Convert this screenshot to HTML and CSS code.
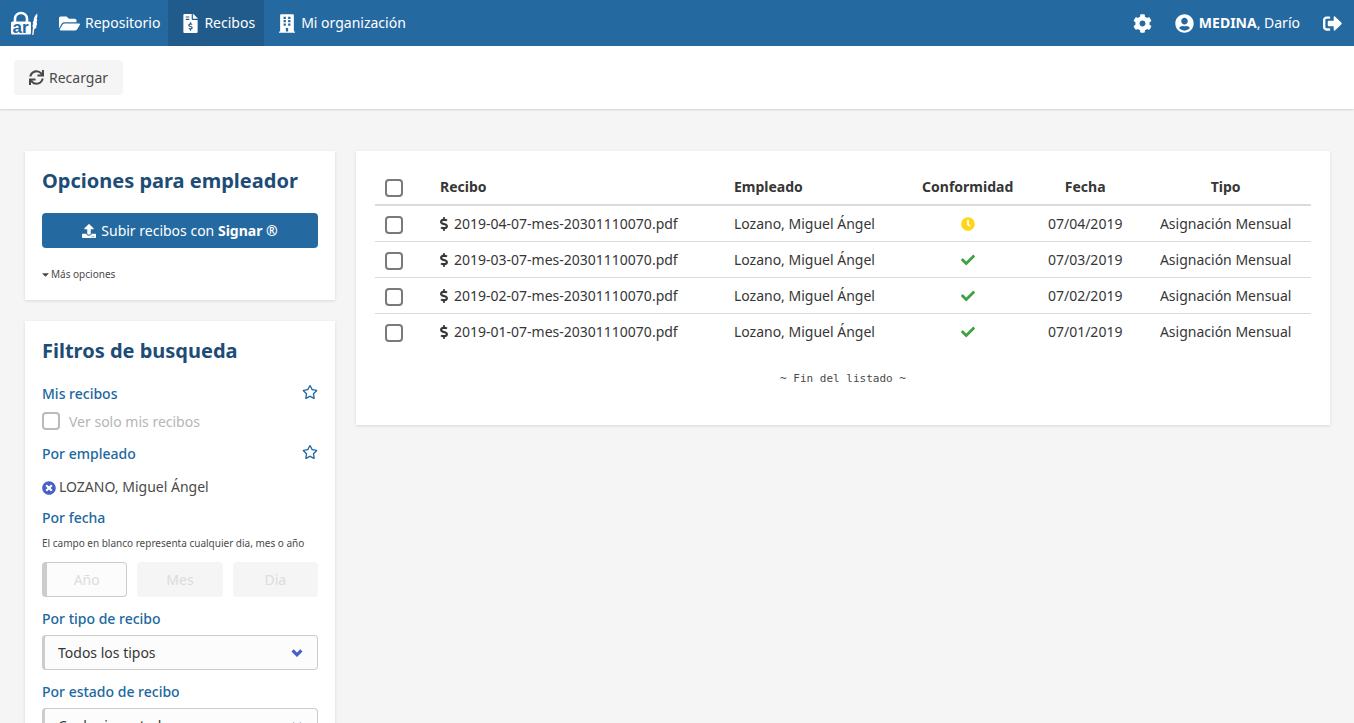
FILE: index.html
```
<!DOCTYPE html>
<html lang="es">
<head>
<meta charset="utf-8">
<meta name="viewport" content="width=device-width, initial-scale=1">
<title>Recibos</title>
<link rel="stylesheet" href="styles.css">
</head>
<body>
<svg class="sprite" aria-hidden="true">
  <symbol id="star" viewBox="0 0 576 512"><path d="M528.1 171.5L382 150.2 316.7 17.8c-11.7-23.6-45.6-23.9-57.4 0L194 150.2 47.9 171.5c-26.2 3.8-36.7 36.1-17.7 54.6l105.7 103-25 145.5c-4.5 26.3 23.2 46 46.4 33.7L288 439.6l130.7 68.7c23.2 12.2 50.9-7.4 46.4-33.7l-25-145.5 105.7-103c19-18.5 8.5-50.8-17.7-54.6zM388.6 312.3l23.7 138.4L288 385.4l-124.3 65.3 23.7-138.4-100.6-98 139-20.2 62.2-126 62.2 126 139 20.2-100.6 98z"/></symbol>
  <symbol id="check" viewBox="0 0 512 512"><path d="M173.898 439.404l-166.4-166.4c-9.997-9.997-9.997-26.206 0-36.204l36.203-36.204c9.997-9.998 26.207-9.998 36.204 0L192 312.69 432.095 72.596c9.997-9.997 26.207-9.997 36.204 0l36.203 36.204c9.997 9.997 9.997 26.206 0 36.204l-294.4 294.401c-9.998 9.997-26.207 9.997-36.204-.001z"/></symbol>
  <symbol id="dollar" viewBox="0 0 288 512"><path d="M209.2 233.4l-108-31.6C88.7 198.2 80 186.5 80 173.5c0-16.3 13.2-29.5 29.5-29.5h66.3c12.2 0 24.2 3.7 34.2 10.5 6.1 4.1 14.3 3.1 19.5-2l34.8-34c7.1-6.9 6.1-18.4-1.8-24.5C238 74.8 207.4 64.1 176 64V16c0-8.8-7.2-16-16-16h-32c-8.8 0-16 7.2-16 16v48h-2.5C45.8 64-5.4 118.7.5 183.6c4.2 46.1 39.4 83.6 83.8 96.6l102.5 30c12.5 3.7 21.2 15.3 21.2 28.3 0 16.3-13.2 29.5-29.5 29.5h-66.3C100 368 88 364.3 78 357.5c-6.1-4.1-14.3-3.1-19.5 2l-34.8 34c-7.1 6.9-6.1 18.4 1.8 24.5 24.5 19.2 55.1 29.9 86.5 30v48c0 8.8 7.2 16 16 16h32c8.8 0 16-7.2 16-16v-48.2c46.6-.9 90.3-28.6 105.7-72.7 21.5-61.6-14.6-124.8-72.5-141.7z"/></symbol>
  <symbol id="chevron" viewBox="0 0 12 8"><path d="M1.600 1.400L6 5.800l4.400-4.400" fill="none" stroke="currentColor" stroke-width="3.200"/></symbol>
</svg>

<nav class="navbar">
  <a class="brand" href="#" aria-label="Inicio">
    <svg class="brand-logo" viewBox="0 0 27 25">
      <path d="M4 12V7.500a6 5.500 0 0 1 12 0V12" fill="none" stroke="currentColor" stroke-width="2.600"/>
      <rect x="0" y="10.500" width="20" height="13" rx="1.500" fill="currentColor"/>
      <text class="brand-text" x="1.500" y="22">ar</text>
      <path d="M26.200 2.500c-2 1.500-3.400 4-3.600 7.500l-.9 1.500.5 1.500-.8 1.500.5 2-.7 7.500h1.200l.9-6c1.300-.5 2-1.300 2.400-2.600l-.9-.2 1.100-1.300c.2-.8.2-1.500.1-2.300l-.9-.1 1-1.300c.1-.8.100-1.500 0-2.300l-.8-.1.900-1.300c.2-1.300.2-2.700 0-4z" fill="currentColor"/>
    </svg>
  </a>
  <a class="nav-link" href="#">
    <svg class="icon icon-folder" viewBox="0 0 576 512"><path d="M572.694 292.093L500.27 416.248A63.997 63.997 0 0 1 444.989 448H45.025c-18.523 0-30.064-20.093-20.731-36.093l72.424-124.155A64 64 0 0 1 152 256h399.964c18.523 0 30.064 20.093 20.730 36.093zM152 224h328v-48c0-26.510-21.490-48-48-48H272l-64-64H48C21.490 64 0 85.490 0 112v278.046l69.077-118.418C86.214 242.250 117.989 224 152 224z"/></svg>
    <span>Repositorio</span>
  </a>
  <a class="nav-link is-active" href="#" aria-current="page">
    <svg class="icon icon-file" viewBox="0 0 384 512"><path d="M377 105L279.100 7c-4.500-4.500-10.600-7-17-7H256v128h128v-6.100c0-6.300-2.500-12.400-7-16.900zm-153 31V0H24C10.700 0 0 10.700 0 24v464c0 13.300 10.700 24 24 24h336c13.300 0 24-10.700 24-24V160H248c-13.200 0-24-10.800-24-24zM64 72c0-4.420 3.580-8 8-8h80c4.420 0 8 3.580 8 8v16c0 4.420-3.580 8-8 8H72c-4.420 0-8-3.580-8-8V72zm0 80v-16c0-4.420 3.580-8 8-8h80c4.420 0 8 3.580 8 8v16c0 4.420-3.580 8-8 8H72c-4.420 0-8-3.580-8-8zm144 263.880V440c0 4.420-3.580 8-8 8h-16c-4.420 0-8-3.580-8-8v-24.290c-11.290-.58-22.270-4.520-31.370-11.350-3.900-2.930-4.100-8.770-.57-12.140l11.750-11.210c2.770-2.640 6.890-2.760 10.130-.73 3.870 2.420 8.260 3.720 12.820 3.720h28.110c6.500 0 11.800-5.920 11.800-13.190 0-5.950-3.610-11.190-8.770-12.730l-45-13.500c-18.590-5.580-31.580-23.420-31.580-43.390 0-24.520 19.050-44.440 42.670-45.070V232c0-4.420 3.580-8 8-8h16c4.420 0 8 3.580 8 8v24.290c11.290.58 22.270 4.510 31.370 11.350 3.900 2.930 4.100 8.770.57 12.140l-11.750 11.210c-2.770 2.640-6.890 2.760-10.130.73-3.870-2.430-8.260-3.720-12.820-3.720h-28.110c-6.500 0-11.800 5.920-11.800 13.190 0 5.950 3.610 11.190 8.770 12.730l45 13.500c18.590 5.580 31.580 23.420 31.580 43.390 0 24.530-19.050 44.440-42.670 45.070z"/></svg>
    <span>Recibos</span>
  </a>
  <a class="nav-link" href="#">
    <svg class="icon icon-building" viewBox="0 0 448 512"><path fill-rule="evenodd" d="M436 480h-20V24c0-13.255-10.745-24-24-24H56C42.745 0 32 10.745 32 24v456H12c-6.627 0-12 5.373-12 12v20h448v-20c0-6.627-5.373-12-12-12zM128 64h64v64h-64zM256 64h64v64h-64zM128 160h64v64h-64zM256 160h64v64h-64zM128 256h64v64h-64zM256 256h64v64h-64zM192 384h64v96h-64z"/></svg>
    <span>Mi organización</span>
  </a>
  <div class="nav-end">
    <a class="nav-action" href="#" aria-label="Configuración">
      <svg class="icon icon-lg" viewBox="0 0 512 512"><path d="M487.400 315.700l-42.600-24.600c4.300-23.200 4.300-47 0-70.200l42.600-24.600c4.900-2.800 7.100-8.600 5.500-14-11.100-35.600-30-67.800-54.700-94.600-3.800-4.100-10-5.100-14.800-2.300L380.800 110c-17.900-15.400-38.500-27.300-60.800-35.100V25.800c0-5.600-3.900-10.500-9.400-11.700-36.700-8.200-74.300-7.800-109.200 0-5.500 1.200-9.400 6.100-9.400 11.700V75c-22.200 7.900-42.800 19.800-60.800 35.100L88.700 85.500c-4.900-2.800-11-1.900-14.800 2.300-24.700 26.700-43.600 58.900-54.700 94.600-1.700 5.400.6 11.200 5.500 14L67.300 221c-4.300 23.200-4.300 47 0 70.200l-42.600 24.600c-4.900 2.800-7.100 8.600-5.500 14 11.100 35.600 30 67.800 54.700 94.600 3.800 4.100 10 5.100 14.800 2.300l42.600-24.600c17.900 15.400 38.500 27.300 60.800 35.100v49.200c0 5.600 3.900 10.500 9.400 11.700 36.700 8.200 74.300 7.800 109.200 0 5.500-1.200 9.400-6.100 9.400-11.700v-49.200c22.200-7.900 42.800-19.800 60.800-35.100l42.600 24.600c4.900 2.800 11 1.900 14.800-2.300 24.700-26.700 43.600-58.900 54.700-94.600 1.500-5.500-.7-11.300-5.600-14.100zM256 336c-44.100 0-80-35.900-80-80s35.900-80 80-80 80 35.900 80 80-35.900 80-80 80z"/></svg>
    </a>
    <a class="nav-user" href="#">
      <svg class="icon icon-lg" viewBox="0 0 496 512"><path d="M248 8C111 8 0 119 0 256s111 248 248 248 248-111 248-248S385 8 248 8zm0 96c48.600 0 88 39.400 88 88s-39.400 88-88 88-88-39.400-88-88 39.400-88 88-88zm0 344c-58.700 0-111.300-26.600-146.500-68.200 18.800-35.400 55.600-59.800 98.500-59.800 2.400 0 4.800.4 7.100 1.100 13 4.200 26.600 6.900 40.900 6.900 14.300 0 28-2.700 40.900-6.900 2.300-.7 4.700-1.100 7.100-1.100 42.900 0 79.700 24.400 98.500 59.800C359.300 421.400 306.700 448 248 448z"/></svg>
      <span><b>MEDINA</b>, Darío</span>
    </a>
    <a class="nav-action" href="#" aria-label="Salir">
      <svg class="icon icon-lg" viewBox="0 0 512 512"><path d="M497 273L329 441c-15 15-41 4.500-41-17v-96H152c-13.300 0-24-10.700-24-24v-96c0-13.300 10.700-24 24-24h136V88c0-21.400 25.900-32 41-17l168 168c9.300 9.400 9.300 24.600 0 34zM192 436v-40c0-6.600-5.400-12-12-12H96c-17.700 0-32-14.300-32-32V160c0-17.700 14.300-32 32-32h84c6.600 0 12-5.400 12-12V76c0-6.600-5.400-12-12-12H96c-53 0-96 43-96 96v192c0 53 43 96 96 96h84c6.600 0 12-5.400 12-12z"/></svg>
    </a>
  </div>
</nav>

<div class="toolbar">
  <button class="button" type="button">
    <svg class="icon icon-md" viewBox="0 0 512 512"><path d="M440.650 12.570l4 82.770A247.160 247.160 0 0 0 255.830 8C134.730 8 33.910 94.920 12.290 209.820A12 12 0 0 0 24.090 224h49.050a12 12 0 0 0 11.670-9.260 175.910 175.910 0 0 1 317-56.940l-101.460-4.860a12 12 0 0 0-12.570 12v47.410a12 12 0 0 0 12 12H500a12 12 0 0 0 12-12V12a12 12 0 0 0-12-12h-47.370a12 12 0 0 0-11.980 12.570zM255.830 432a175.610 175.610 0 0 1-146-77.800l101.800 4.870a12 12 0 0 0 12.570-12v-47.400a12 12 0 0 0-12-12H12a12 12 0 0 0-12 12V500a12 12 0 0 0 12 12h47.350a12 12 0 0 0 12-12.600l-4.150-82.570A247.170 247.170 0 0 0 255.830 504c121.110 0 221.930-86.920 243.550-201.820a12 12 0 0 0-11.800-14.180h-49.050a12 12 0 0 0-11.670 9.260A175.860 175.860 0 0 1 255.830 432z"/></svg>
    Recargar
  </button>
</div>

<main class="columns">
  <aside class="sidebar">
    <section class="card">
      <h2 class="title">Opciones para empleador</h2>
      <button class="button is-primary" type="button">
        <svg class="icon icon-sm" viewBox="0 0 512 512"><path d="M296 384h-80c-13.300 0-24-10.700-24-24V192h-87.700c-17.800 0-26.700-21.500-14.100-34.100L242.300 5.700c7.500-7.500 19.800-7.500 27.300 0l152.200 152.200c12.600 12.600 3.700 34.100-14.100 34.100H320v168c0 13.300-10.700 24-24 24zm216-8v112c0 13.300-10.700 24-24 24H24c-13.300 0-24-10.700-24-24V376c0-13.300 10.700-24 24-24h136v8c0 30.900 25.100 56 56 56h80c30.900 0 56-25.100 56-56v-8h136c13.300 0 24 10.700 24 24zm-124 88c0-11-9-20-20-20s-20 9-20 20 9 20 20 20 20-9 20-20zm64 0c0-11-9-20-20-20s-20 9-20 20 9 20 20 20 20-9 20-20z"/></svg>
        <span>Subir recibos con <b>Signar ®</b></span>
      </button>
      <button class="more" type="button">
        <svg class="icon-caret" viewBox="0 0 320 512"><path d="M31.300 192h257.300c17.800 0 26.700 21.500 14.100 34.100L174.100 354.800c-7.800 7.800-20.500 7.800-28.300 0L17.200 226.100C4.600 213.500 13.500 192 31.300 192z"/></svg>
        Más opciones
      </button>
    </section>

    <section class="card">
      <h2 class="title">Filtros de busqueda</h2>
      <form class="filters">
        <div class="filter">
          <div class="filter-head">
            <h3 class="label">Mis recibos</h3>
            <button class="star" type="button" aria-label="Favorito: mis recibos"><svg class="icon icon-star"><use href="#star"/></svg></button>
          </div>
          <label class="check-row"><input class="checkbox" type="checkbox" disabled> Ver solo mis recibos</label>
        </div>
        <div class="filter">
          <div class="filter-head">
            <h3 class="label">Por empleado</h3>
            <button class="star" type="button" aria-label="Favorito: por empleado"><svg class="icon icon-star"><use href="#star"/></svg></button>
          </div>
          <div class="employee">
            <button class="remove" type="button" aria-label="Quitar empleado"><svg class="icon icon-sm" viewBox="0 0 512 512"><path d="M256 8C119 8 8 119 8 256s111 248 248 248 248-111 248-248S393 8 256 8zm121.600 313.100c4.700 4.700 4.700 12.300 0 17L338 377.600c-4.700 4.700-12.300 4.700-17 0L256 312l-65.100 65.600c-4.700 4.700-12.300 4.700-17 0L134.400 338c-4.700-4.700-4.700-12.300 0-17l65.600-65-65.600-65.100c-4.700-4.700-4.700-12.300 0-17l39.600-39.600c4.700-4.700 12.300-4.700 17 0l65 65.700 65.100-65.600c4.700-4.700 12.300-4.700 17 0l39.600 39.600c4.700 4.700 4.700 12.300 0 17L312 256l65.600 65.100z"/></svg></button>
            <span>LOZANO, Miguel Ángel</span>
          </div>
        </div>
        <div class="filter">
          <h3 class="label">Por fecha</h3>
          <p class="help">El campo en blanco representa cualquier dia, mes o año</p>
          <div class="date-fields">
            <input class="date-input" type="text" placeholder="Año" aria-label="Año">
            <input class="date-input" type="text" placeholder="Mes" aria-label="Mes" disabled>
            <input class="date-input" type="text" placeholder="Dia" aria-label="Dia" disabled>
          </div>
        </div>
        <div class="filter">
          <label class="label" for="tipo">Por tipo de recibo</label>
          <div class="select">
            <select id="tipo"><option>Todos los tipos</option></select>
            <svg class="select-arrow"><use href="#chevron"/></svg>
          </div>
        </div>
        <div class="filter">
          <label class="label" for="estado">Por estado de recibo</label>
          <div class="select">
            <select id="estado"><option>Cualquier estado</option></select>
            <svg class="select-arrow"><use href="#chevron"/></svg>
          </div>
        </div>
      </form>
    </section>
  </aside>

  <section class="card listing">
    <table class="table">
      <colgroup><col class="col-check"><col class="col-receipt"><col class="col-employee"><col class="col-status"><col class="col-date"><col class="col-type"></colgroup>
      <thead>
        <tr>
          <th class="pick"><input class="checkbox" type="checkbox" aria-label="Seleccionar todos"></th>
          <th>Recibo</th><th>Empleado</th><th class="center">Conformidad</th><th class="center">Fecha</th><th class="center">Tipo</th>
        </tr>
      </thead>
      <tbody>
        <tr>
          <td class="pick"><input class="checkbox" type="checkbox" aria-label="Seleccionar 2019-04-07"></td>
          <td><span class="file"><svg class="icon icon-dollar"><use href="#dollar"/></svg>2019-04-07-mes-20301110070.pdf</span></td>
          <td>Lozano, Miguel Ángel</td>
          <td class="center"><svg class="icon icon-sm is-pending" viewBox="0 0 512 512"><path d="M256,8C119,8,8,119,8,256S119,504,256,504,504,393,504,256,393,8,256,8Zm92.490,313h0l-20,25a16,16,0,0,1-22.490,2.500h0l-67-49.720a40,40,0,0,1-15-31.230V112a16,16,0,0,1,16-16h32a16,16,0,0,1,16,16V256l58,42.500A16,16,0,0,1,348.490,321Z"/></svg></td>
          <td class="center">07/04/2019</td><td class="center">Asignación Mensual</td>
        </tr>
        <tr>
          <td class="pick"><input class="checkbox" type="checkbox" aria-label="Seleccionar 2019-03-07"></td>
          <td><span class="file"><svg class="icon icon-dollar"><use href="#dollar"/></svg>2019-03-07-mes-20301110070.pdf</span></td>
          <td>Lozano, Miguel Ángel</td>
          <td class="center"><svg class="icon icon-sm is-ok"><use href="#check"/></svg></td>
          <td class="center">07/03/2019</td><td class="center">Asignación Mensual</td>
        </tr>
        <tr>
          <td class="pick"><input class="checkbox" type="checkbox" aria-label="Seleccionar 2019-02-07"></td>
          <td><span class="file"><svg class="icon icon-dollar"><use href="#dollar"/></svg>2019-02-07-mes-20301110070.pdf</span></td>
          <td>Lozano, Miguel Ángel</td>
          <td class="center"><svg class="icon icon-sm is-ok"><use href="#check"/></svg></td>
          <td class="center">07/02/2019</td><td class="center">Asignación Mensual</td>
        </tr>
        <tr>
          <td class="pick"><input class="checkbox" type="checkbox" aria-label="Seleccionar 2019-01-07"></td>
          <td><span class="file"><svg class="icon icon-dollar"><use href="#dollar"/></svg>2019-01-07-mes-20301110070.pdf</span></td>
          <td>Lozano, Miguel Ángel</td>
          <td class="center"><svg class="icon icon-sm is-ok"><use href="#check"/></svg></td>
          <td class="center">07/01/2019</td><td class="center">Asignación Mensual</td>
        </tr>
      </tbody>
    </table>
    <p class="list-end">~ Fin del listado ~</p>
  </section>
</main>
</body>
</html>
```
FILE: styles.css
```
* { box-sizing: border-box; }

html { scrollbar-width: none; }

body {
  margin: 0;
  background: #f5f5f5;
  color: #4a4a4a;
  font-family: "Noto Sans", "Open Sans", sans-serif;
  font-size: 14px;
  line-height: 21px;
}

h2, h3, p { margin: 0; }

button, input, select { font: inherit; color: inherit; }

button { cursor: pointer; }

b { font-weight: 700; }

.sprite { display: none; }

.icon { fill: currentColor; flex: none; }
.icon-sm { width: 14px; height: 14px; }
.icon-md { width: 15px; height: 15px; }
.icon-lg { width: 19px; height: 19px; }
.icon-folder { width: 21px; height: 19px; }
.icon-file { width: 15px; height: 19px; }
.icon-building { width: 16px; height: 19px; }
.icon-star { display: block; width: 16px; height: 14px; }
.icon-dollar { width: 8px; height: 14px; }
.icon-caret { width: 7px; height: 11px; fill: currentColor; }

/* Navigation bar */
.navbar {
  display: flex;
  height: 46px;
  background: #2569a1;
  color: #fff;
}

.navbar a {
  display: flex;
  align-items: center;
  color: inherit;
  text-decoration: none;
}

.navbar span { padding-bottom: 2px; }

.brand { padding: 0 11px; }
.brand-logo { width: 27px; height: 25px; }

.brand-text {
  fill: #2569a1;
  font-family: "Liberation Sans", sans-serif;
  font-size: 17px;
  font-weight: 700;
}

.nav-link { gap: 5px; padding: 0 8px 0 10px; }
.nav-link + .nav-link { gap: 6px; padding: 0 9px 0 15px; }
.nav-link.is-active { background: #215b8b; }

.nav-end { display: flex; margin-left: auto; }
.nav-action { padding: 0 12px; }
.nav-user { gap: 5px; padding: 0 11px; }

/* Toolbar */
.toolbar {
  padding: 14px;
  background: #fff;
  box-shadow: 0 1px 2px rgba(10, 10, 10, 0.15);
}

.button {
  display: flex;
  align-items: center;
  justify-content: center;
  gap: 5px;
  height: 35px;
  padding: 0 15px;
  border: 0;
  border-radius: 4px;
  background: #f5f5f5;
}

.button.is-primary {
  width: 100%;
  background: #2569a1;
  color: #fff;
}

/* Page columns */
.columns {
  display: grid;
  grid-template-columns: 310px minmax(0, 1fr);
  align-items: start;
  gap: 21px;
  padding: 42px 24px 42px 25px;
}

.sidebar { display: grid; gap: 21px; }

.card {
  padding: 17px 17px 16px;
  background: #fff;
  box-shadow: 0 1px 3px rgba(10, 10, 10, 0.12);
}

.title {
  margin-bottom: 20px;
  color: #1d4d77;
  font-size: 20px;
  font-weight: 700;
  line-height: 25px;
  white-space: nowrap;
}

.more {
  display: flex;
  align-items: center;
  gap: 2px;
  margin-top: 16px;
  padding: 0;
  border: 0;
  background: none;
  font-size: 10px;
  line-height: 20px;
}

/* Filters */
.filters { display: grid; gap: 11px; }

.filter-head { display: flex; justify-content: space-between; }

.label {
  display: block;
  color: #2068a0;
  font-size: 14px;
  font-weight: 500;
  line-height: 21px;
}

.star, .remove {
  display: block;
  padding: 0;
  border: 0;
  background: none;
}

.star { color: #2068a0; height: 18px; }
.remove { color: #485fc7; height: 14px; }

.checkbox {
  appearance: none;
  display: block;
  width: 18px;
  height: 18px;
  margin: 0;
  border: 2px solid #7a7a7a;
  border-radius: 4px;
  background: #fff;
}

.checkbox:disabled { border-color: #bababa; }

.check-row {
  display: flex;
  align-items: center;
  gap: 9px;
  height: 22px;
  margin-top: 6px;
  color: #b5b5b5;
}

.employee {
  display: flex;
  align-items: center;
  gap: 3px;
  height: 20px;
  margin-top: 12px;
}

.help {
  margin-top: 5px;
  font-size: 10px;
  line-height: 20px;
}

.date-fields {
  display: grid;
  grid-template-columns: repeat(3, 1fr);
  gap: 10px;
  margin-top: 9px;
}

.date-input {
  min-width: 0;
  height: 35px;
  padding: 0 10px;
  border: 1px solid #ccc;
  border-left-width: 5px;
  border-radius: 4px;
  background: #fcfcfc;
  text-align: center;
}

.date-input:disabled { border: 0; background: #f5f5f5; }
.date-input::placeholder { color: #dcdcdc; opacity: 1; }

.select {
  display: grid;
  align-items: center;
  margin-top: 6px;
}

.select select {
  grid-area: 1 / 1;
  appearance: none;
  width: 100%;
  height: 35px;
  padding: 0 36px 0 13px;
  border: 1px solid #ccc;
  border-left-width: 3px;
  border-radius: 4px;
  background: #fcfcfc;
  color: #363636;
}

.select-arrow {
  grid-area: 1 / 1;
  justify-self: end;
  width: 12px;
  height: 8px;
  margin-right: 15px;
  color: #485fc7;
  pointer-events: none;
}

/* Receipts table */
.listing { padding: 18px 19px 36px; }

.table {
  width: 100%;
  border-collapse: separate;
  border-spacing: 0;
  table-layout: fixed;
  color: #363636;
}

.col-check { width: 55px; }
.col-receipt { width: 31.4%; }
.col-employee { width: 19.4%; }
.col-status { width: 13.3%; }
.col-date { width: 11.8%; }

.table th, .table td {
  padding: 7px 10px;
  border-bottom: 1px solid #dbdbdb;
  text-align: left;
  vertical-align: middle;
  white-space: nowrap;
}

.table th { border-bottom-width: 2px; font-weight: 700; }
.table .pick { padding-top: 9px; }
.table tbody tr:last-child td { border-bottom: 0; }
.table .center { text-align: center; }
.table .center .icon { display: block; margin: 0 auto; }

.file { display: flex; align-items: center; gap: 6px; }

.is-pending { color: #ffd517; }
.is-ok { color: #40a144; }

.list-end {
  margin-top: 20px;
  font-family: "DejaVu Sans Mono", monospace;
  font-size: 11px;
  line-height: 20px;
  text-align: center;
}
```
